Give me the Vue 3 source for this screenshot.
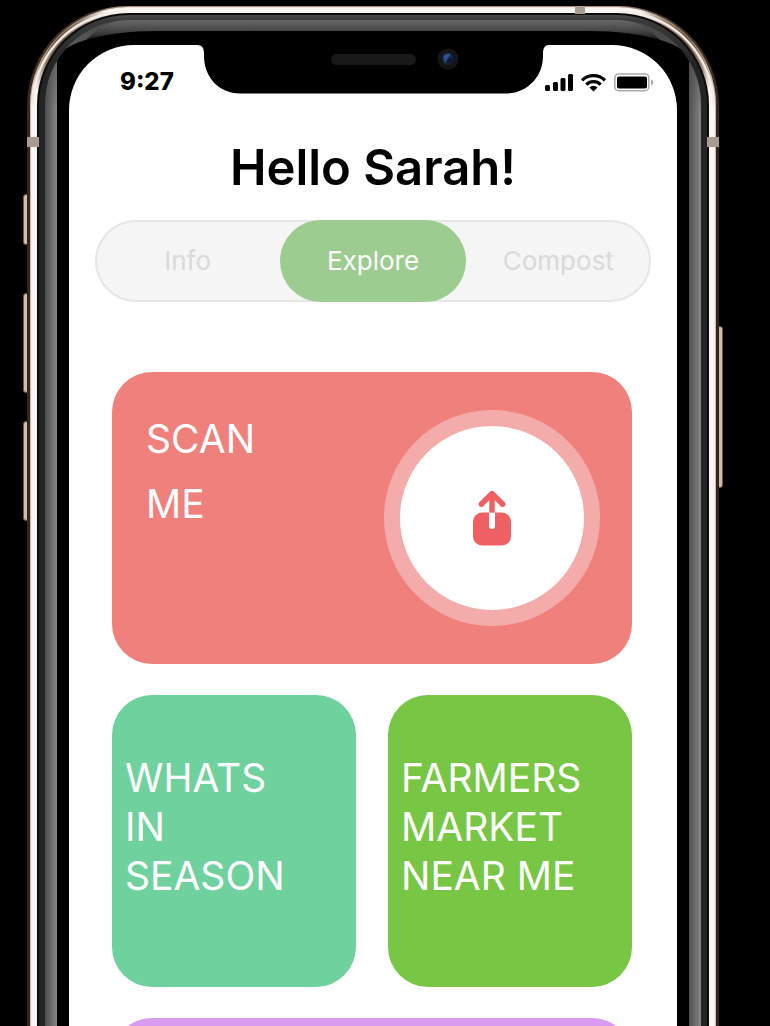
<script setup>
import { ref } from 'vue'

const tabs = ['Info', 'Explore', 'Compost']
const active = ref('Explore')
</script>

<template>
  <div class="stage">
    <div class="phone">
      <span class="key mute"></span>
      <span class="key volume-up"></span>
      <span class="key volume-down"></span>
      <span class="key power"></span>
      <div class="edge">
        <div class="rim">
          <div class="seam">
            <div class="band">
              <div class="gloss">
                <div class="sheen">
                  <div class="glass">
                    <main class="screen">
                      <header class="status">
                        <span class="time">9:27</span>
                        <svg class="notch" width="352" height="49" viewBox="0 0 352 49" aria-hidden="true">
                          <path d="M0 0C5 0 7 3 7 8V11C7 32 22 48.500 43 48.500H309C330 48.500 346 32 346 11V8C346 3 348 0 352 0Z" fill="#000" />
                          <rect x="134" y="9" width="85" height="11" rx="5.500" fill="#191919" />
                          <circle cx="251" cy="14" r="10.500" fill="#151515" />
                          <circle cx="251" cy="14" r="6" fill="#14233f" />
                          <path d="M246 12a6 6 0 0 1 8-3l-3 5-3 4z" fill="#28508a" />
                          <circle cx="253" cy="16" r="3" fill="#101a33" />
                        </svg>
                        <svg class="signals" width="110" height="20" viewBox="0 0 110 20" role="img" aria-label="Signal, Wi-Fi and battery">
                          <rect x="1" y="12" width="5" height="6" rx="1.500" />
                          <rect x="9" y="9" width="5" height="9" rx="1.500" />
                          <rect x="16.500" y="5" width="5" height="13" rx="1.500" />
                          <rect x="24" y="1" width="5" height="17" rx="1.500" />
                          <g fill="none" stroke="#000" stroke-width="3.200">
                            <path d="M38 7.300a16.500 16.500 0 0 1 23 0" />
                            <path d="M42.300 11.600a10.300 10.300 0 0 1 14.400 0" />
                          </g>
                          <path d="M45.500 14.400a6 6 0 0 1 8 0L49.500 18.400z" />
                          <rect x="70.800" y="1" width="34" height="16.700" rx="4" fill="none" stroke="#aaa" stroke-width="1.600" />
                          <rect x="73" y="3.500" width="30" height="12" rx="2" />
                          <path d="M107 6.500c3 1 3 5 0 6z" fill="#aaa" />
                        </svg>
                      </header>

                      <h1>Hello Sarah!</h1>

                      <nav class="tabs" aria-label="Sections">
                        <button
                          v-for="tab in tabs"
                          :key="tab"
                          type="button"
                          :class="{ active: tab === active }"
                          :aria-pressed="tab === active"
                          @click="active = tab"
                        >{{ tab }}</button>
                      </nav>

                      <section class="cards">
                        <div class="card scan">
                          <h2>SCAN<br />ME</h2>
                          <button class="upload" type="button" aria-label="Scan">
                            <svg width="40" height="56" viewBox="0 0 40 56" aria-hidden="true">
                              <rect x="1" y="22.500" width="38" height="33" rx="9" fill="#ee6062" />
                              <path d="M20 22.500V36" stroke="#fff" stroke-width="6" />
                              <circle cx="20" cy="36" r="3" fill="#fff" />
                              <path d="M20 22.500V4M9 14.500L20 3.500L31 14.500" fill="none" stroke="#ee6062" stroke-width="5.400" stroke-linecap="butt" stroke-linejoin="round" />
                              <circle cx="9.300" cy="14.200" r="2.700" fill="#ee6062" />
                              <circle cx="30.700" cy="14.200" r="2.700" fill="#ee6062" />
                            </svg>
                          </button>
                        </div>
                        <button class="card season" type="button">WHATS<br />IN<br />SEASON</button>
                        <button class="card market" type="button">FARMERS<br />MARKET<br />NEAR ME</button>
                        <div class="card more"></div>
                      </section>
                    </main>
                  </div>
                </div>
              </div>
            </div>
          </div>
        </div>
        <span class="antenna top"></span>
        <span class="antenna left"></span>
        <span class="antenna right"></span>
      </div>
    </div>
  </div>
</template>

<style>
body {
  background: #000;
}
</style>

<style scoped>
.stage {
  height: 100vh;
  overflow: hidden;
  background: #000;
  font-family: Inter, "Liberation Sans", sans-serif;
}

.stage * {
  box-sizing: border-box;
}

.phone {
  position: relative;
  margin: 6px 51px 0 27px;
}

/* Metal frame, from the outside in */
.edge {
  position: relative;
  padding: 1px 3px 0;
  border-radius: 100px 100px 0 0;
  background: linear-gradient(#a58b7a, #4a3829 8px, #33261d 120px);
}

.rim {
  padding: 6px 7px 0;
  border-radius: 98px 98px 0 0;
  background:
    radial-gradient(circle at 97px 99px, transparent 92px, #f6ede7 94px, #f6ede7 95px, transparent 96px) 0 0 / 97px 99px no-repeat,
    radial-gradient(circle at 0 99px, transparent 92px, #f6ede7 94px, #f6ede7 95px, transparent 96px) 100% 0 / 97px 99px no-repeat,
    radial-gradient(circle at 26px 30px, #54402f 0, #94806f 30px, transparent 56px),
    radial-gradient(circle at calc(100% - 26px) 30px, #54402f 0, #94806f 30px, transparent 56px),
    #fbf6f3;
  box-shadow: inset 1px 0 1px #c9b3a3, inset -1px 0 1px #c9b3a3;
}

.seam {
  padding: 2px 2px 0;
  border-radius: 92px 92px 0 0;
  background: #0b0b0b;
}

.band {
  padding: 5px 6px 0;
  border-radius: 90px 90px 0 0;
  background: linear-gradient(#4c4c4c, #3a3a3a 5px, #232525 50px);
}

.gloss {
  overflow: hidden;
  padding: 0 12px;
  border-radius: 84px 84px 0 0;
  background:
    linear-gradient(#484848, transparent 90px),
    linear-gradient(90deg, #4c4c4c, #858585 12px, #858585 50%, transparent 50%),
    linear-gradient(270deg, #858585, #505050 12px);
}

.sheen {
  padding-top: 11px;
  border-radius: 70px 70px 0 0 / 105px 105px 0 0;
  background: linear-gradient(#686868, #444 11px, #000 26px);
}

.glass {
  padding: 14px 12px 0;
  border-radius: 100px 100px 0 0 / 30px 30px 0 0;
  background: #000;
}

.antenna {
  position: absolute;
  background: #ab9b8f;
}

.antenna.top {
  top: 0;
  right: 134px;
  width: 10px;
  height: 8px;
}

.antenna.left,
.antenna.right {
  top: 131px;
  width: 12px;
  height: 10px;
}

.antenna.left {
  left: 0;
}

.antenna.right {
  right: 0;
}

.key {
  position: absolute;
  left: -4px;
  width: 6px;
  border: 1px solid #705540;
  border-radius: 3px;
  background: #d4bba8;
}

.mute {
  top: 188px;
  height: 51px;
}

.volume-up {
  top: 287px;
  height: 100px;
}

.volume-down {
  top: 415px;
  height: 100px;
}

.power {
  top: 320px;
  right: -4px;
  left: auto;
  height: 162px;
}

/* Screen */
.screen {
  min-height: 100vh;
  border-radius: 65px 65px 0 0;
  background: #fff;
  color: #000;
}

.status {
  display: grid;
  grid-template-columns: minmax(0, 1fr) 352px minmax(0, 1fr);
  height: 49px;
}

.time {
  padding: 22px 0 0 51px;
  font-size: 24px;
  font-weight: 800;
  line-height: 30px;
}

.signals {
  flex: none;
  justify-self: end;
  margin: 28px 23px 0 0;
}

h1 {
  margin: 44px 0 22px;
  font-size: 49px;
  font-weight: 600;
  line-height: 60px;
  text-align: center;
}

button {
  border: 0;
  font: inherit;
  cursor: pointer;
}

.tabs {
  display: grid;
  grid-template-columns: repeat(3, 1fr);
  height: 82px;
  margin: 0 26px;
  border-radius: 41px;
  background: #f5f5f5;
  box-shadow: inset 0 0 0 2px #e6e6e6;
}

.tabs button {
  padding: 0 0 2px;
  border-radius: 41px;
  background: transparent;
  color: #d9d9d9;
  font-size: 26px;
}

.tabs .active {
  background: #9ccc90;
  color: #fff;
}

.cards {
  display: grid;
  grid-template-columns: 1fr 1fr;
  grid-auto-rows: 292px;
  gap: 31px 32px;
  padding: 70px 45px 31px 43px;
}

.card {
  border-radius: 40px;
  color: #fff;
  font-size: 39px;
  line-height: 49px;
  text-align: left;
}

.scan {
  display: flex;
  grid-column: 1 / -1;
  align-items: center;
  justify-content: space-between;
  padding: 0 32px 0 34px;
  background: #f0807c;
}

h2 {
  align-self: flex-start;
  margin: 34px 0 0;
  font-size: 39px;
  font-weight: 400;
  line-height: 65px;
}

.upload {
  display: flex;
  align-items: center;
  justify-content: center;
  width: 216px;
  height: 216px;
  padding: 0;
  border: 16px solid #f4acaa;
  border-radius: 50%;
  background: #fff;
}

.season,
.market {
  padding: 0 13px 30px;
}

.season {
  background: #6fd19e;
}

.market {
  background: #77c644;
}

.more {
  grid-column: 1 / -1;
  background: #d89bf0;
}
</style>
